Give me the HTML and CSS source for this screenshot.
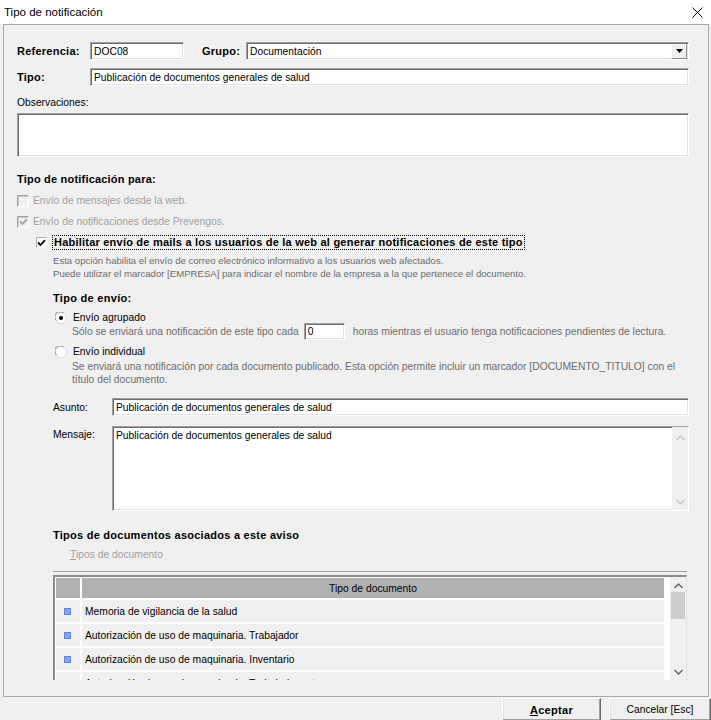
FILE: index.html
```html
<!DOCTYPE html>
<html lang="es">
<head>
  <meta charset="UTF-8">
  <meta name="viewport" content="width=device-width, initial-scale=1.0">
  <title>Tipo de notificación</title>
  <link rel="stylesheet" href="styles.css">
</head>
<body>
<div class="window">
  <div class="titlebar">
    <span class="title">Tipo de notificación</span>
    <svg class="close" width="11" height="11" viewBox="0 0 11 11">
      <path d="M0.5 0.5 L10.5 10.5 M10.5 0.5 L0.5 10.5" stroke="#111" stroke-width="1"/>
    </svg>
  </div>

  <div class="panel">
    <div class="row row-top">
      <span class="lbl-bold lbl-main">Referencia:</span>
      <div class="field field-ref">DOC08</div>
      <span class="lbl-bold lbl-grupo">Grupo:</span>
      <div class="field combo">
        <span>Documentación</span>
        <span class="combo-btn">
          <svg width="7" height="4" viewBox="0 0 7 4"><path d="M0 0 H7 L3.5 4 Z" fill="#000"/></svg>
        </span>
      </div>
    </div>

    <div class="row row-tipo">
      <span class="lbl-bold lbl-main">Tipo:</span>
      <div class="field field-wide">Publicación de documentos generales de salud</div>
    </div>

    <div class="obs-label">Observaciones:</div>
    <div class="field memo memo-obs"></div>

    <div class="heading">Tipo de notificación para:</div>

    <div class="check-row disabled">
      <span class="box box-off"></span>
      <span>Envío de mensajes desde la web.</span>
    </div>
    <div class="check-row disabled">
      <span class="box box-off">
        <svg width="9" height="8" viewBox="0 0 9 8"><path d="M1 3.5 L3.5 6 L8 1.2" fill="none" stroke="#a0a0a0" stroke-width="1.8"/></svg>
      </span>
      <span>Envío de notificaciones desde Prevengos.</span>
    </div>
    <div class="check-row check-mail">
      <span class="box box-on">
        <svg width="9" height="8" viewBox="0 0 9 8"><path d="M1 3.5 L3.5 6 L8 1.2" fill="none" stroke="#000" stroke-width="1.8"/></svg>
      </span>
      <span class="focus-text">Habilitar envío de mails a los usuarios de la web al generar notificaciones de este tipo</span>
    </div>
    <div class="desc desc-mail">
      <div>Esta opción habilita el envío de correo electrónico informativo a los usuarios web afectados.</div>
      <div>Puede utilizar el marcador [EMPRESA] para indicar el nombre de la empresa a la que pertenece el documento.</div>
    </div>

    <div class="sub-heading">Tipo de envío:</div>

    <div class="radio-row radio-first">
      <svg class="radio" width="12" height="12" viewBox="0 0 12 12">
        <circle cx="6" cy="6" r="5.5" fill="#fff" stroke="#d9d9d9"/>
        <path d="M1.2 8.5 A5 5 0 0 1 8.5 1.2" fill="none" stroke="#8a8a8a" stroke-width="1"/>
        <circle cx="6" cy="6" r="2" fill="#000"/>
      </svg>
      <span>Envío agrupado</span>
    </div>
    <div class="hours-row desc">
      <span>Sólo se enviará una notificación de este tipo cada</span>
      <div class="field field-hours">0</div>
      <span>horas mientras el usuario tenga notificaciones pendientes de lectura.</span>
    </div>
    <div class="radio-row radio-second">
      <svg class="radio" width="12" height="12" viewBox="0 0 12 12">
        <circle cx="6" cy="6" r="5.5" fill="#fff" stroke="#d9d9d9"/>
        <path d="M1.2 8.5 A5 5 0 0 1 8.5 1.2" fill="none" stroke="#8a8a8a" stroke-width="1"/>
      </svg>
      <span>Envío individual</span>
    </div>
    <div class="desc desc-individual">
      <div>Se enviará una notificación por cada documento publicado. Esta opción permite incluir un marcador [DOCUMENTO_TITULO] con el</div>
      <div>título del documento.</div>
    </div>

    <div class="row row-asunto">
      <span class="lbl-mail">Asunto:</span>
      <div class="field field-wide">Publicación de documentos generales de salud</div>
    </div>
    <div class="row-mensaje">
      <span class="lbl-mail lbl-top">Mensaje:</span>
      <div class="field memo memo-msg">
        <div class="memo-text">Publicación de documentos generales de salud</div>
        <div class="memo-scroll">
          <svg width="9" height="6" viewBox="0 0 9 6"><path d="M0.5 5 L4.5 1 L8.5 5" fill="none" stroke="#c2c2c2" stroke-width="1.2"/></svg>
          <svg width="9" height="6" viewBox="0 0 9 6"><path d="M0.5 1 L4.5 5 L8.5 1" fill="none" stroke="#c2c2c2" stroke-width="1.2"/></svg>
        </div>
      </div>
    </div>

    <div class="sub-heading docs-heading">Tipos de documentos asociados a este aviso</div>
    <div class="docs-link"><u>T</u>ipos de documento</div>

    <div class="docs">
      <div class="grid">
        <div class="grid-list">
          <div class="grid-row grid-head">
            <div class="cell cell-icon"></div>
            <div class="cell cell-name">Tipo de documento</div>
          </div>
          <div class="grid-row">
            <div class="cell cell-icon"><span class="doc-mark"></span></div>
            <div class="cell cell-name">Memoria de vigilancia de la salud</div>
          </div>
          <div class="grid-row">
            <div class="cell cell-icon"><span class="doc-mark"></span></div>
            <div class="cell cell-name">Autorización de uso de maquinaria. Trabajador</div>
          </div>
          <div class="grid-row">
            <div class="cell cell-icon"><span class="doc-mark"></span></div>
            <div class="cell cell-name">Autorización de uso de maquinaria. Inventario</div>
          </div>
          <div class="grid-row">
            <div class="cell cell-icon"><span class="doc-mark"></span></div>
            <div class="cell cell-name">Autorización de uso de maquinaria. Trabajador externo</div>
          </div>
        </div>
        <div class="vscroll">
          <svg class="arrow-up" width="9" height="6" viewBox="0 0 9 6"><path d="M0.5 5 L4.5 1 L8.5 5" fill="none" stroke="#606060" stroke-width="1.3"/></svg>
          <div class="thumb"></div>
          <svg class="arrow-down" width="9" height="6" viewBox="0 0 9 6"><path d="M0.5 1 L4.5 5 L8.5 1" fill="none" stroke="#606060" stroke-width="1.3"/></svg>
        </div>
      </div>
    </div>
  </div>

  <div class="footer">
    <button class="btn btn-ok" type="button"><u>A</u>ceptar</button>
    <button class="btn btn-cancel" type="button">Cancelar [Esc]</button>
  </div>
</div>
</body>
</html>
```

FILE: styles.css
```css
* {
  box-sizing: border-box;
}

body {
  margin: 0;
  background-color: #f0f0f0;
  font-family: "Liberation Sans", Arial, sans-serif;
  font-size: 10.3px;
  color: #000;
}

.window {
  width: 711px;
  height: 720px;
  overflow: hidden;
  background-color: #f0f0f0;
}

/* Title bar */
.titlebar {
  height: 24px;
  background-color: #fff;
  display: flex;
  align-items: center;
  justify-content: space-between;
  padding: 0 8px 0 4px;
}

.title {
  font-size: 11.5px;
}

/* Main panel */
.panel {
  margin: 0 2px 0 3px;
  height: 673px;
  border: 1px solid #a9a9a9;
  padding: 17px 19px 0 13px;
  overflow: hidden;
}

.row {
  display: flex;
  align-items: center;
}

.row-top,
.row-tipo {
  height: 18px;
}

.row-tipo {
  margin-top: 8px;
}

.lbl-bold {
  font-weight: bold;
  font-size: 11px;
  letter-spacing: 0.25px;
}

.lbl-main {
  width: 73px;
  flex-shrink: 0;
}

.lbl-grupo {
  margin-left: 18px;
  width: 44px;
  flex-shrink: 0;
}

/* Sunken edit boxes */
.field {
  height: 18px;
  background-color: #fff;
  border-top: 1px solid #a0a0a0;
  border-left: 1px solid #a0a0a0;
  border-bottom: 1px solid #fff;
  border-right: 1px solid #fff;
  box-shadow: inset 1px 1px 0 #6d6d6d, inset -1px -1px 0 #e3e3e3;
  padding: 0 3px;
  display: flex;
  align-items: center;
  white-space: nowrap;
}

.field-ref {
  width: 94px;
  flex-shrink: 0;
}

.field-wide {
  flex: 1;
}

.combo {
  flex: 1;
  justify-content: space-between;
  padding-right: 1px;
}

.combo-btn {
  width: 16px;
  height: 15px;
  background-color: #f0f0f0;
  border-right: 1px solid #8a8a8a;
  border-bottom: 1px solid #8a8a8a;
  border-top: 1px solid #fff;
  border-left: 1px solid #fff;
  display: flex;
  align-items: center;
  justify-content: center;
}

.obs-label {
  margin-top: 10px;
  line-height: 14px;
}

.memo {
  margin-top: 3px;
  align-items: flex-start;
}

.memo-obs {
  height: 44px;
}

.heading {
  margin-top: 15px;
  line-height: 14px;
  font-weight: bold;
  font-size: 11px;
  letter-spacing: 0.2px;
}

/* Check boxes */
.check-row {
  height: 21px;
  display: flex;
  align-items: center;
  gap: 4px;
}

.disabled {
  color: #a0a0a0;
}

.heading + .check-row {
  margin-top: 4px;
}

.box {
  width: 12px;
  height: 12px;
  display: flex;
  align-items: center;
  justify-content: center;
  flex-shrink: 0;
}

.box-off {
  background-color: #f0f0f0;
  border-top: 1px solid #a0a0a0;
  border-left: 1px solid #a0a0a0;
  border-bottom: 1px solid #fff;
  border-right: 1px solid #fff;
  box-shadow: inset 1px 1px 0 #c8c8c8;
}

.box-on {
  width: 11px;
  height: 11px;
  background-color: #fff;
  border-top: 1px solid #b0b0b0;
  border-left: 1px solid #b0b0b0;
  border-bottom: 1px solid #fff;
  border-right: 1px solid #fff;
}

.check-mail {
  padding-left: 19px;
  gap: 6px;
}

.focus-text {
  font-weight: bold;
  font-size: 11px;
  letter-spacing: 0.22px;
  outline: 1px dotted #000;
  padding: 0 1px;
  line-height: 13px;
}

.desc {
  color: #6d6d6d;
  line-height: 13px;
}

.desc-mail {
  padding-left: 36px;
  font-size: 9.6px;
  margin-top: 1px;
}

.sub-heading {
  margin-top: 11px;
  padding-left: 36px;
  line-height: 14px;
  font-weight: bold;
  font-size: 11px;
  letter-spacing: 0.3px;
}

/* Radio buttons */
.radio-row {
  display: flex;
  align-items: center;
  gap: 6px;
  padding-left: 38px;
  line-height: 14px;
}

.radio-first {
  margin-top: 6px;
}

.radio-second {
  margin-top: 5px;
}

.hours-row {
  display: flex;
  align-items: center;
  height: 17px;
  margin-top: -2px;
  padding-left: 55px;
}

.field-hours {
  width: 41px;
  height: 17px;
  margin: 0 8px 0 5px;
  color: #000;
}

.desc-individual {
  margin-top: 1px;
  padding-left: 55px;
}

.row-asunto {
  margin-top: 12px;
  padding-left: 36px;
}

.lbl-mail {
  width: 59px;
  flex-shrink: 0;
}

.row-mensaje {
  display: flex;
  margin-top: 10px;
  padding-left: 36px;
}

.lbl-top {
  padding-top: 2px;
  line-height: 14px;
}

.memo-msg {
  margin-top: 0;
  flex: 1;
  height: 85px;
  padding: 0 0 0 3px;
  align-items: stretch;
}

.memo-text {
  flex: 1;
  padding-top: 3px;
}

.memo-scroll {
  width: 16px;
  background-color: #f0f0f0;
  display: flex;
  flex-direction: column;
  justify-content: space-between;
  align-items: center;
  padding: 8px 0 5px;
}

.docs-heading {
  margin-top: 17px;
  letter-spacing: 0.25px;
}

.docs-link {
  margin-top: 6px;
  padding-left: 53px;
  line-height: 14px;
  color: #a0a0a0;
}

/* Document grid */
.docs {
  margin: 9px 2px 0 36px;
  border-top: 1px solid #a0a0a0;
  padding-top: 3px;
}

.grid {
  height: 105px;
  display: flex;
  background-color: #fff;
  border-top: 2px solid #8c8c8c;
  border-left: 2px solid #8c8c8c;
  border-right: 1px solid #e3e3e3;
  overflow: hidden;
}

.grid-list {
  flex: 1;
  padding: 1px 6px 0 1px;
}

.grid-row {
  display: flex;
  height: 22px;
  margin-top: 2px;
}

.grid-head {
  height: 20px;
  margin-top: 0;
}

.cell {
  background-color: #f0f0f0;
  display: flex;
  align-items: center;
}

.grid-head .cell {
  background-color: #b1b1b1;
}

.cell-icon {
  width: 24px;
  margin-right: 2px;
  justify-content: center;
}

.cell-name {
  flex: 1;
  padding-left: 3px;
}

.grid-head .cell-name {
  justify-content: center;
  padding-left: 0;
}

.doc-mark {
  width: 7px;
  height: 7px;
  margin-right: 1px;
  background-color: #7ea6e8;
  border: 1px solid #5b87d6;
}

.vscroll {
  width: 16px;
  background-color: #f0f0f0;
  display: flex;
  flex-direction: column;
  align-items: center;
  padding-top: 6px;
}

.thumb {
  width: 14px;
  height: 27px;
  margin-top: 3px;
  background-color: #cdcdcd;
}

.arrow-down {
  margin-top: auto;
  margin-bottom: 5px;
}

/* Footer buttons */
.footer {
  display: flex;
  justify-content: flex-end;
  gap: 8px;
  padding-top: 1px;
}

.btn {
  height: 23px;
  background-color: #f0f0f0;
  border-top: 1px solid #fff;
  border-left: 1px solid #fff;
  border-right: 1px solid #696969;
  border-bottom: 1px solid #696969;
  box-shadow: inset -1px -1px 0 #a0a0a0, inset 1px 1px 0 #e3e3e3;
  font-family: "Liberation Sans", Arial, sans-serif;
  font-size: 10.3px;
  color: #000;
  padding: 0;
}

.btn-ok {
  width: 99px;
  font-weight: bold;
  font-size: 11px;
  letter-spacing: 0.3px;
}

.btn-cancel {
  width: 102px;
}
```
